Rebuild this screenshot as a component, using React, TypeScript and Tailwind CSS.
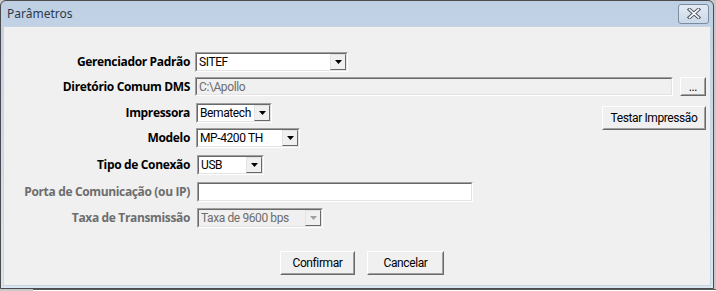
import type { ReactNode } from 'react';

const uiFont = "font-['Roboto','Liberation_Sans',Arial,sans-serif] text-[12px] tracking-[-0.4px]";

function Sunken({
  width,
  height = 20,
  disabled,
  children,
}: {
  width: number;
  height?: number;
  disabled?: boolean;
  children?: ReactNode;
}) {
  return (
    <div
      className="border border-t-[#a0a0a0] border-l-[#a0a0a0] border-r-white border-b-white shrink-0"
      style={{ width, height }}
    >
      <div
        className={
          'h-full border border-t-[#696969] border-l-[#696969] border-r-[#e3e3e3] border-b-[#e3e3e3] flex items-center ' +
          (disabled ? 'bg-[#f0f0f0] text-[#6d6d6d]' : 'bg-white text-black')
        }
      >
        {children}
      </div>
    </div>
  );
}

function Arrow({ disabled }: { disabled?: boolean }) {
  return (
    <div className="h-full w-[16px] shrink-0 border border-t-[#e3e3e3] border-l-[#e3e3e3] border-r-[#696969] border-b-[#696969] bg-[#f0f0f0] flex items-center justify-center">
      <svg width="7" height="4" viewBox="0 0 7 4">
        <path d="M0 0h7L3.5 4z" fill={disabled ? '#a0a0a0' : '#000'} />
      </svg>
    </div>
  );
}

function Select({ width, value, disabled }: { width: number; value: string; disabled?: boolean }) {
  return (
    <Sunken width={width} disabled={disabled}>
      <span className={`${uiFont} flex-1 pl-[2px] leading-none whitespace-nowrap overflow-hidden`}>{value}</span>
      <Arrow disabled={disabled} />
    </Sunken>
  );
}

function Button({
  width,
  height,
  children,
  className = '',
}: {
  width: number;
  height: number;
  children: ReactNode;
  className?: string;
}) {
  return (
    <div
      className={`border border-t-white border-l-white border-r-[#696969] border-b-[#696969] shrink-0 ${className}`}
      style={{ width, height }}
    >
      <div className="h-full border border-t-[#f0f0f0] border-l-[#f0f0f0] border-r-[#a0a0a0] border-b-[#a0a0a0] bg-[#f0f0f0] flex items-center justify-center">
        <span className={`${uiFont} text-black leading-none`}>{children}</span>
      </div>
    </div>
  );
}

function Label({ children, disabled }: { children: ReactNode; disabled?: boolean }) {
  return (
    <div
      className={
        "w-[186px] shrink-0 text-right font-['Open_Sans','Noto_Sans',sans-serif] font-bold text-[12px] tracking-[-0.35px] leading-none whitespace-nowrap " +
        (disabled ? 'text-[#6d6d6d]' : 'text-black')
      }
    >
      {children}
    </div>
  );
}

export default function App() {
  return (
    <div className="w-[716px] h-[291px] bg-[#c8c8c8] overflow-hidden">
      <div className="w-[714px] h-[289px] border border-[#4b4b4b] rounded-t-[6px] bg-gradient-to-b from-[#bfd0e4] to-[#dbe6f3] flex flex-col">
        {/* barra de título */}
        <div className="h-[25px] shrink-0 flex items-center pl-[6px] pr-[4px]">
          <span className="font-['Noto_Sans',sans-serif] text-[12px] text-[#2b3a4a]">Parâmetros</span>
          <div className="ml-auto w-[31px] h-[20px] rounded-[3px] border border-[#7d8ba0] bg-gradient-to-b from-[#e4ebf4] to-[#cbd8e7] flex items-center justify-center">
            <svg width="14" height="11" viewBox="0 0 14 11">
              <path d="M2.5 1.5l9 8M11.5 1.5l-9 8" stroke="#4f5866" strokeWidth="3.6" strokeLinecap="square" />
              <path d="M2.5 1.5l9 8M11.5 1.5l-9 8" stroke="#fff" strokeWidth="1.6" strokeLinecap="square" />
            </svg>
          </div>
        </div>

        {/* conteúdo */}
        <div className="flex-1 mx-[2px] mb-[2px] bg-[#f0f0f0] border border-[#c9d5e3] flex flex-col pr-[4px]">
          <div className="mt-[25px] h-[20px] flex items-center gap-[5px]">
            <Label>Gerenciador Padrão</Label>
            <Select width={153} value="SITEF" />
          </div>

          <div className="mt-[5px] h-[19px] flex items-center gap-[5px]">
            <Label>Diretório Comum DMS</Label>
            <Sunken width={478} height={19} disabled>
              <span className={`${uiFont} pl-[2px] leading-none text-[#6d6d6d]`}>C:\Apollo</span>
            </Sunken>
            <Button width={26} height={19} className="ml-auto">
              ...
            </Button>
          </div>

          <div className="mt-[7px] h-[20px] flex items-start gap-[6px]">
            <Label>
              <span className="block pt-[4px]">Impressora</span>
            </Label>
            <Select width={76} value="Bematech" />
            <Button width={104} height={24} className="ml-auto mt-[3px]">
              Testar Impressão
            </Button>
          </div>

          <div className="mt-[5px] h-[20px] flex items-center gap-[6px]">
            <Label>Modelo</Label>
            <Select width={104} value="MP-4200 TH" />
          </div>

          <div className="mt-[7px] h-[20px] flex items-center gap-[7px]">
            <Label>Tipo de Conexão</Label>
            <Select width={67} value="USB" />
          </div>

          <div className="mt-[7px] h-[20px] flex items-center gap-[7px]">
            <Label disabled>Porta de Comunicação (ou IP)</Label>
            <Sunken width={276} />
          </div>

          <div className="mt-[6px] h-[20px] flex items-center gap-[7px]">
            <Label disabled>Taxa de Transmissão</Label>
            <Select width={126} value="Taxa de 9600 bps" disabled />
          </div>

          <div className="mt-[23px] flex gap-[12px] pl-[276px]">
            <Button width={75} height={24}>
              Confirmar
            </Button>
            <Button width={77} height={24}>
              Cancelar
            </Button>
          </div>
        </div>
      </div>
      <div className="h-[2px] ml-[33px] border-t border-[#5a5a5a] bg-white" />
    </div>
  );
}
